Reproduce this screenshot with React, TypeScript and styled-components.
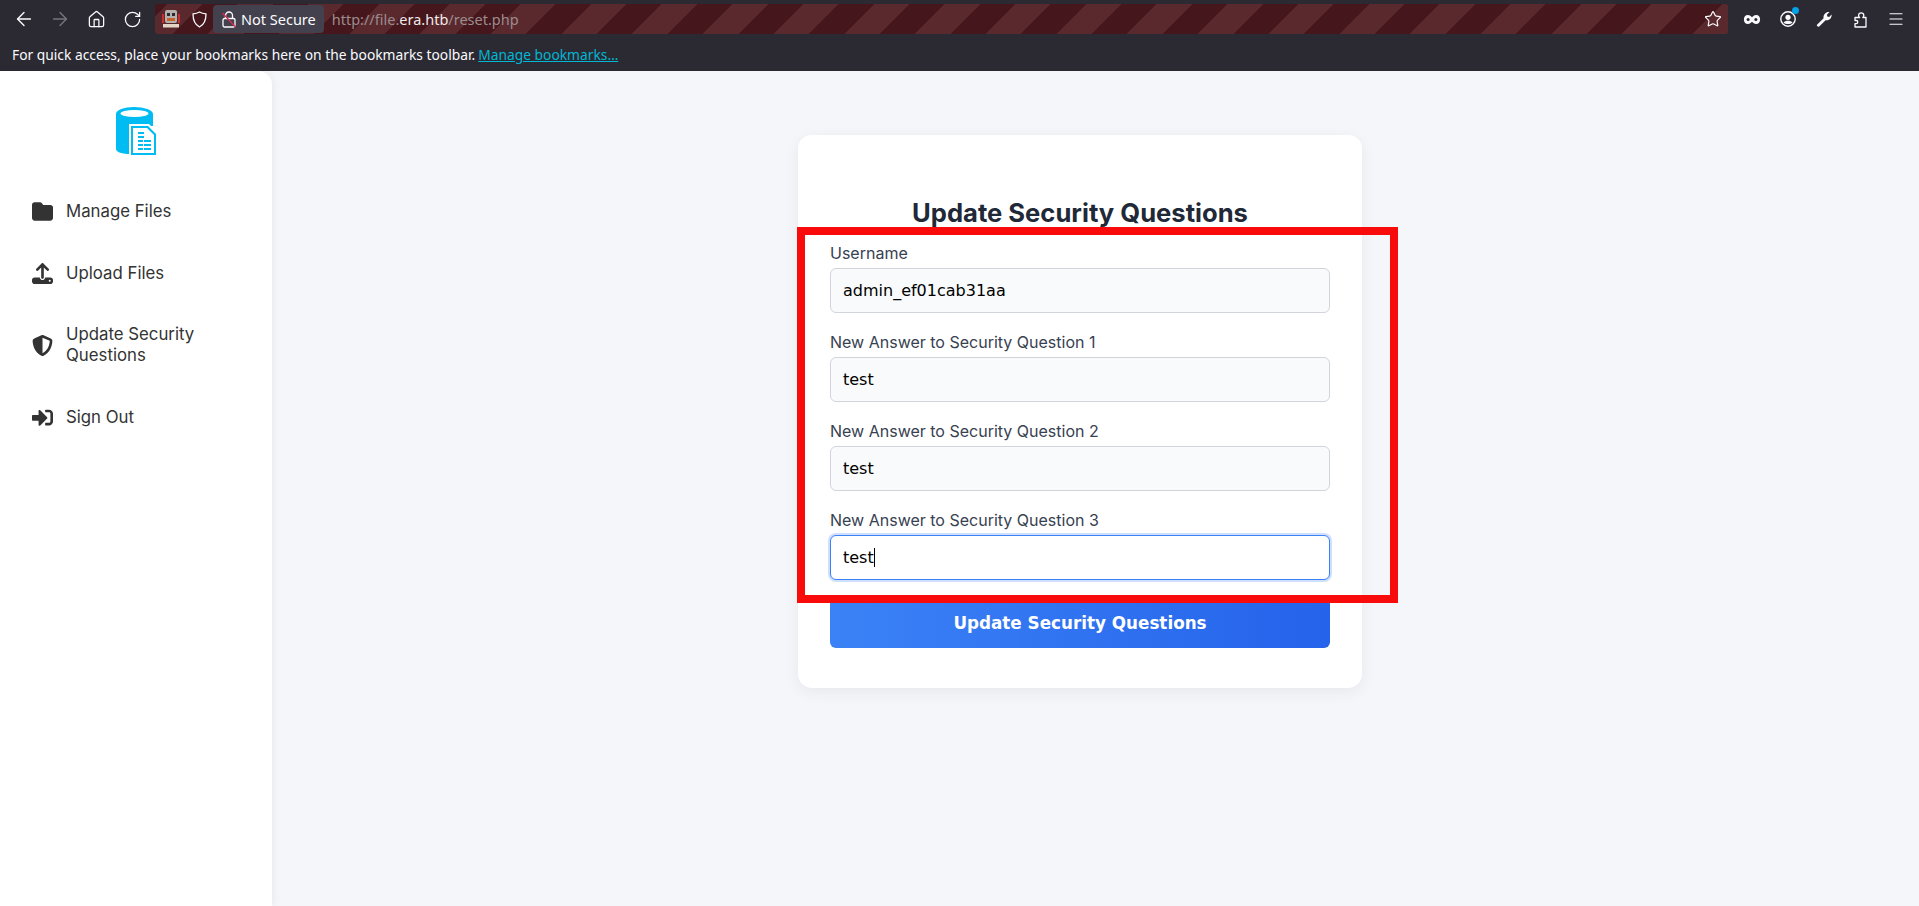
import React from 'react';
import styled, { createGlobalStyle } from 'styled-components';
import { FaSignInAlt } from 'react-icons/fa';
import { FaFolder, FaUpload, FaShieldHalved } from 'react-icons/fa6';
import { ArrowLeft, ArrowRight, Home, RotateCw, Star, Menu } from 'lucide-react';

const GlobalStyle = createGlobalStyle`
  html, body { margin: 0; padding: 0; height: 906px; overflow: hidden; background: #f4f6fa; }
  * { box-sizing: border-box; }
`;

const Shell = styled.div`
  display: flex;
  flex-direction: column;
  height: 906px;
`;

const Chrome = styled.header`
  background: #2b2a33;
  color: #fbfbfe;
  font-family: 'Noto Sans', sans-serif;
  height: 71px;
  flex: none;
`;

const Toolbar = styled.div`
  display: flex;
  align-items: center;
  height: 38px;
  padding-left: 6px;
`;

const NavButton = styled.span<{ $dim?: boolean }>`
  width: 36px;
  display: flex;
  justify-content: center;
  color: ${(p) => (p.$dim ? '#76757c' : '#fbfbfe')};
`;

const UrlBar = styled.div`
  display: flex;
  align-items: center;
  width: 1573px;
  height: 30px;
  margin-left: 5px;
  padding: 0 6px 0 2px;
  border-radius: 3px;
  background: repeating-linear-gradient(-45deg, #5a292e 0 25px, #45161b 25px 50px);
`;

const BarIcon = styled.span`
  width: 28px;
  display: flex;
  justify-content: center;
  flex: none;
`;

const SecureChip = styled.span`
  display: flex;
  align-items: center;
  gap: 5px;
  height: 28px;
  padding: 0 8px 0 9px;
  border-radius: 4px;
  background: #42414d;
  font-size: 14.5px;
`;

const UrlText = styled.span`
  margin-left: 8px;
  font-size: 14.5px;
  color: #9b8c8f;
  b { font-weight: 400; color: #f0e9ea; }
`;

const Spacer = styled.span`
  flex: 1;
`;

const ToolActions = styled.div`
  display: flex;
  align-items: center;
  margin-left: 6px;
`;

const ToolButton = styled.span`
  position: relative;
  width: 36px;
  display: flex;
  justify-content: center;
`;

const Dot = styled.i`
  position: absolute;
  top: -4px;
  right: 7px;
  width: 7px;
  height: 7px;
  border-radius: 50%;
  background: #00a2e8;
`;

const BookmarkBar = styled.div`
  height: 33px;
  padding-left: 12px;
  display: flex;
  align-items: center;
  font-size: 13.8px;
  a { margin-left: 3px; color: #00b7d4; text-decoration: underline; }
`;

const Body = styled.div`
  flex: 1;
  display: flex;
  min-height: 0;
`;

const Sidebar = styled.aside`
  width: 272px;
  flex: none;
  background: #fff;
  border-top-right-radius: 14px;
  box-shadow: 2px 0 8px rgba(0, 0, 0, 0.05);
  padding: 36px 0 0 32px;
  font-family: Inter, sans-serif;
`;

const LogoWrap = styled.div`
  width: 208px;
  display: flex;
  justify-content: center;
  margin-bottom: 24px;
`;

const NavList = styled.nav`
  display: flex;
  flex-direction: column;
`;

const NavItem = styled.a`
  display: flex;
  align-items: center;
  gap: 13px;
  width: 200px;
  padding: 20.3px 0;
  color: #333;
  font-size: 16.8px;
  line-height: 20.8px;
  svg { width: 21px; height: 21px; flex: none; }
`;

const Main = styled.main`
  flex: 1;
  display: flex;
  justify-content: center;
  align-items: flex-start;
  padding: 64px 31px 0 0;
  font-family: Inter, sans-serif;
`;

const Card = styled.section`
  position: relative;
  width: 564px;
  padding: 63px 32px 40px;
  background: #fff;
  border-radius: 14px;
  box-shadow: 0 4px 16px rgba(0, 0, 0, 0.06);
`;

const Title = styled.h2`
  margin: 0 0 15px;
  text-align: center;
  font-size: 25.6px;
  line-height: 29px;
  font-weight: 700;
  color: #1f2937;
`;

const Field = styled.div`
  margin-bottom: 18px;
`;

const Label = styled.label`
  display: block;
  margin-bottom: 4px;
  font-size: 16px;
  line-height: 22px;
  color: #374151;
`;

const Input = styled.div<{ $focused?: boolean }>`
  display: flex;
  align-items: center;
  height: 45px;
  padding: 0 12px;
  border-radius: 6px;
  border: 1px solid ${(p) => (p.$focused ? '#3b82f6' : '#d1d5db')};
  background: ${(p) => (p.$focused ? '#fff' : '#f9fafb')};
  box-shadow: ${(p) => (p.$focused ? '0 0 0 2px rgba(59, 130, 246, 0.25)' : 'none')};
  color: #000;
  font-size: 16px;
  font-family: 'DejaVu Sans', sans-serif;
`;

const Caret = styled.i`
  width: 1px;
  height: 19px;
  background: #000;
`;

const Submit = styled.button`
  display: block;
  width: 100%;
  height: 50px;
  margin-top: 1px;
  border: 0;
  border-radius: 6px;
  background: linear-gradient(90deg, #3b82f6, #2563eb);
  color: #fff;
  font-family: 'DejaVu Sans', sans-serif;
  font-size: 16.8px;
  font-weight: 700;
`;

const Highlight = styled.div`
  position: absolute;
  top: 92px;
  left: -1px;
  width: 601px;
  height: 376px;
  border: 8px solid #f90b0b;
  pointer-events: none;
`;

const Logo = () => (
  <svg width="43" height="50" viewBox="0 0 43 50">
    <path
      d="M1 7C1 3 9 0 19 0s19 3 19 7v12H16v28C7 47 1 45 1 42V7z"
      fill="#00bcf2"
    />
    <ellipse cx="19.500" cy="6.500" rx="14" ry="3.500" fill="#fff" />
    <path d="M14 17h20l9 9v24H14V17z" fill="#fff" />
    <path d="M16 19h17l8 8v21H16V19z" fill="#00bcf2" />
    <path d="M18 21h14l7 7v18H18V21z" fill="#fff" />
    <path
      d="M23 25h6v2h-6zM23 29h6v2h-6zM23 33h5v2h-5zM29 33h7v2h-7zM23 37h5v2h-5zM29 37h7v2h-7zM23 41h5v2h-5zM29 41h7v2h-7z"
      fill="#00bcf2"
    />
  </svg>
);

const LockOff = () => (
  <svg width="14" height="17" viewBox="0 0 14 17" fill="none">
    <rect x="1" y="7.500" width="12" height="8.500" rx="1.500" stroke="#fbfbfe" strokeWidth="1.300" />
    <path d="M3.500 7.500V4.500a3.500 3.500 0 0 1 7 0v3" stroke="#fbfbfe" strokeWidth="1.300" />
    <path d="M0.500 2l13 14" stroke="#e22850" strokeWidth="1.200" />
  </svg>
);

const RobotIcon = () => (
  <svg width="18" height="20" viewBox="0 0 18 20">
    <path d="M0 5h2v9H0zM16 5h2v9h-2z" fill="#c7302f" />
    <rect x="3" y="1" width="12" height="13" rx="2" fill="#b5b2ad" />
    <rect x="5" y="4" width="3" height="3" fill="#2b2a33" />
    <rect x="10" y="4" width="3" height="3" fill="#2b2a33" />
    <rect x="5" y="9" width="8" height="3" fill="#c8622a" />
    <rect x="1" y="15" width="16" height="3.500" fill="#e4d6c4" />
  </svg>
);

const ShieldIcon = () => (
  <svg width="15" height="17" viewBox="0 0 15 17" fill="none">
    <path
      d="M7.500 1c2 1.200 4 1.700 6.500 1.900 0 5.600-1.500 10.400-6.500 13.100C2.500 13.300 1 8.500 1 2.900 3.500 2.700 5.500 2.200 7.500 1z"
      stroke="#fbfbfe"
      strokeWidth="1.300"
      strokeLinejoin="round"
    />
  </svg>
);

const Mask = () => (
  <svg width="18" height="11" viewBox="0 0 20 12" fill="none">
    <path
      d="M5.500 1c2 0 3.400 1.600 4.500 2.600C11.100 2.600 12.500 1 14.500 1 17.500 1 19 3.400 19 6s-1.500 5-4.500 5c-2 0-3.400-1.600-4.500-2.600C8.900 9.400 7.500 11 5.500 11 2.500 11 1 8.600 1 6s1.500-5 4.500-5z"
      fill="#fbfbfe"
    />
    <circle cx="5.700" cy="6" r="1.700" fill="#2b2a33" />
    <circle cx="14.300" cy="6" r="1.700" fill="#2b2a33" />
  </svg>
);

const UserIcon = () => (
  <svg width="16" height="16" viewBox="0 0 16 16" fill="none">
    <circle cx="8" cy="8" r="7.200" stroke="#fbfbfe" strokeWidth="1.400" />
    <circle cx="8" cy="6.300" r="2.600" fill="#fbfbfe" />
    <path d="M3.500 11.500c1-1.200 2.600-1.700 4.500-1.700s3.500.5 4.500 1.700c-1 1-2.700 1.500-4.500 1.500s-3.500-.5-4.500-1.500z" fill="#fbfbfe" />
  </svg>
);

const WrenchIcon = () => (
  <svg width="16" height="16" viewBox="0 0 16 16" fill="#fbfbfe">
    <path d="M1 13.800l6.600-6.600C7 4.200 9.500.6 13.500 1.100l-2.600 2.600.4 1.900 1.900.4 2.400-2.400c.4 3.700-3 6.300-6 5.600l-6.400 6.400c-.9.800-3 -.7-2.200-1.800z" />
  </svg>
);

const PuzzleIcon = () => (
  <svg width="15" height="17" viewBox="0 0 15 17" fill="none">
    <path
      d="M2 16h11V6.500H9.800c.7-.6 1-1.300 1-2.100a2.600 2.600 0 0 0-5.200 0c0 .8.300 1.500 1 2.100H2v3h1.200a1.500 1.500 0 0 1 0 3.200H2V16z"
      stroke="#fbfbfe"
      strokeWidth="1.300"
      strokeLinejoin="round"
    />
  </svg>
);

const questions = ['New Answer to Security Question 1', 'New Answer to Security Question 2'];

export default function App() {
  return (
    <Shell>
      <GlobalStyle />
      <Chrome>
        <Toolbar>
          <NavButton><ArrowLeft size={22} strokeWidth={1.5} /></NavButton>
          <NavButton $dim><ArrowRight size={22} strokeWidth={1.5} /></NavButton>
          <NavButton><Home size={19} strokeWidth={1.6} /></NavButton>
          <NavButton><RotateCw size={19} strokeWidth={1.6} /></NavButton>
          <UrlBar>
            <BarIcon><RobotIcon /></BarIcon>
            <BarIcon><ShieldIcon /></BarIcon>
            <SecureChip><LockOff />Not Secure</SecureChip>
            <UrlText>http://file.<b>era.htb</b>/reset.php</UrlText>
            <Spacer />
            <Star size={18} strokeWidth={1.6} />
          </UrlBar>
          <ToolActions>
            <ToolButton><Mask /></ToolButton>
            <ToolButton><UserIcon /><Dot /></ToolButton>
            <ToolButton><WrenchIcon /></ToolButton>
            <ToolButton><PuzzleIcon /></ToolButton>
            <ToolButton><Menu size={18} strokeWidth={1.5} /></ToolButton>
          </ToolActions>
        </Toolbar>
        <BookmarkBar>
          For quick access, place your bookmarks here on the bookmarks toolbar.
          <a>Manage bookmarks…</a>
        </BookmarkBar>
      </Chrome>
      <Body>
        <Sidebar>
          <LogoWrap><Logo /></LogoWrap>
          <NavList>
            <NavItem><FaFolder />Manage Files</NavItem>
            <NavItem><FaUpload />Upload Files</NavItem>
            <NavItem><FaShieldHalved />Update Security Questions</NavItem>
            <NavItem><FaSignInAlt />Sign Out</NavItem>
          </NavList>
        </Sidebar>
        <Main>
          <Card>
            <Title>Update Security Questions</Title>
            <Field>
              <Label>Username</Label>
              <Input>admin_ef01cab31aa</Input>
            </Field>
            {questions.map((q) => (
              <Field key={q}>
                <Label>{q}</Label>
                <Input>test</Input>
              </Field>
            ))}
            <Field>
              <Label>New Answer to Security Question 3</Label>
              <Input $focused>test<Caret /></Input>
            </Field>
            <Submit>Update Security Questions</Submit>
            <Highlight />
          </Card>
        </Main>
      </Body>
    </Shell>
  );
}
